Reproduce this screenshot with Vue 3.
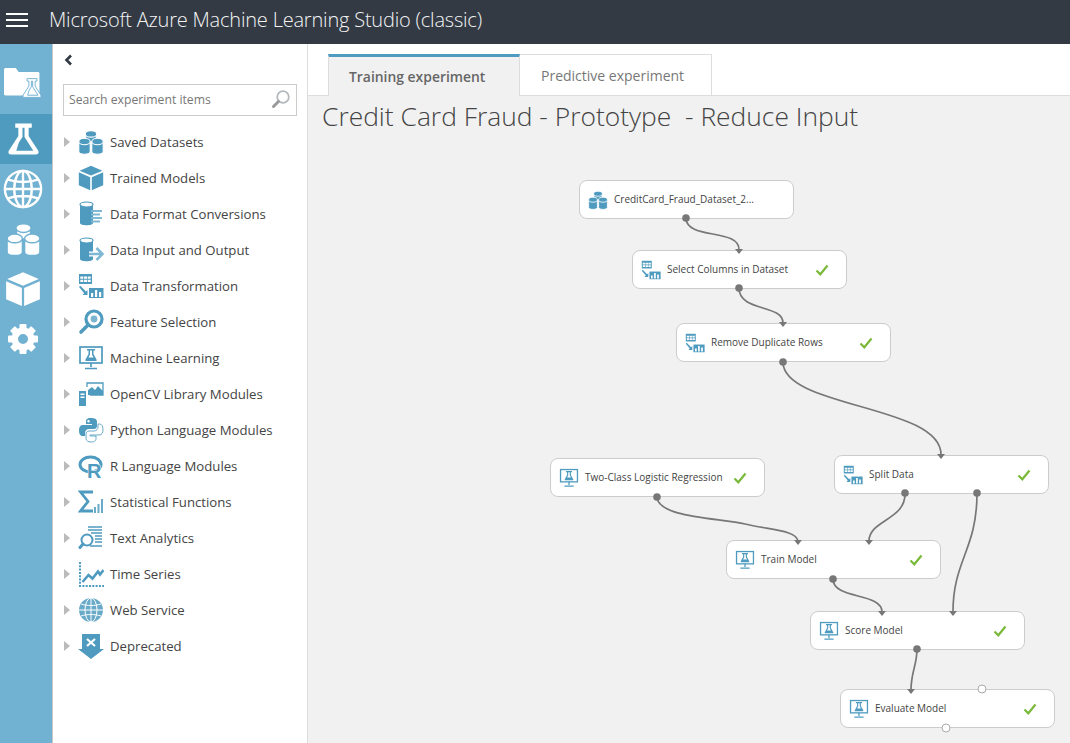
<template>
  <div class="studio">
    <svg class="iconDefs" width="0" height="0" aria-hidden="true">
      <defs>
        <symbol id="i-flask" viewBox="0 0 32 32">
          <path fill="currentColor" fill-rule="evenodd" d="M8 1h16v4h-3v8l9 14c1.500 2.800 0 4-2 4H4c-2 0-3.500-1.200-2-4l9-14V5H8zM15 5v9l-3.500 5.500-2.500 8h16.500L17 14V5z" />
        </symbol>
        <symbol id="i-folder" viewBox="0 0 32 32">
          <path fill="currentColor" d="M0 5c0-1 .6-1.500 1.500-1.500h9L13 7h17c1 0 1.500.5 1.500 1.500V28H1.500C.5 28 0 27.500 0 26.500z" />
        </symbol>
        <symbol id="i-globe" viewBox="0 0 32 32">
          <g fill="none" stroke="currentColor" stroke-width="1.900">
            <circle cx="16" cy="16" r="14.500" />
            <ellipse cx="16" cy="16" rx="7" ry="14.500" />
            <path d="M16 1.500v29M1.500 16h29M4 8.500c7 2.500 17 2.500 24 0M4 23.500c7-2.500 17-2.500 24 0" />
          </g>
        </symbol>
        <symbol id="i-cylinders" viewBox="0 0 32 32">
          <g class="gapStroke" fill="currentColor">
            <path d="M9.500 7v9h13V7z" />
            <ellipse cx="16" cy="6" rx="7" ry="4" />
            <path d="M1 16v12c0 4 14 4 14 0V16z" />
            <ellipse cx="8" cy="15.500" rx="7" ry="4" />
            <path d="M17 16v12c0 4 14 4 14 0V16z" />
            <ellipse cx="24" cy="15.500" rx="7" ry="4" />
          </g>
        </symbol>
        <symbol id="i-cube" viewBox="0 0 32 32">
          <g fill="currentColor">
            <path d="M16 1l14 6-14 6L2 7z" />
            <path d="M1 9l14 6v16L1 25z" />
            <path d="M31 9l-14 6v16l14-6z" />
          </g>
        </symbol>
        <symbol id="i-gear" viewBox="0 0 32 32">
          <g fill="currentColor">
            <path fill-rule="evenodd" d="M16 4.500a11.500 11.500 0 1 0 0 23 11.500 11.500 0 0 0 0-23zm0 6.500a5 5 0 1 1 0 10 5 5 0 0 1 0-10z" />
            <rect x="12.500" y="1" width="7" height="6" rx="1" />
            <rect x="12.500" y="25" width="7" height="6" rx="1" />
            <rect x="1" y="12.500" width="6" height="7" rx="1" />
            <rect x="25" y="12.500" width="6" height="7" rx="1" />
            <rect x="12.500" y="1" width="7" height="6" rx="1" transform="rotate(45 16 16)" />
            <rect x="12.500" y="1" width="7" height="6" rx="1" transform="rotate(135 16 16)" />
            <rect x="12.500" y="1" width="7" height="6" rx="1" transform="rotate(225 16 16)" />
            <rect x="12.500" y="1" width="7" height="6" rx="1" transform="rotate(315 16 16)" />
          </g>
        </symbol>
        <symbol id="i-format" viewBox="0 0 26 26">
          <path fill="currentColor" d="M2 4v18c0 3 13 3 13 0V4z" />
          <ellipse cx="8.500" cy="3.500" rx="6.500" ry="2.500" fill="#fff" stroke="currentColor" stroke-width="1.200" />
          <path fill="none" stroke="#7fb8d4" stroke-width="2" d="M13 10h11M13 13.500h9M13 17h11M13 20.500h9" />
        </symbol>
        <symbol id="i-input" viewBox="0 0 26 26">
          <path fill="currentColor" d="M2 4v18c0 3 13 3 13 0V4z" />
          <ellipse cx="8.500" cy="3.500" rx="6.500" ry="2.500" fill="#fff" stroke="currentColor" stroke-width="1.200" />
          <path fill="none" stroke="#fff" stroke-width="5" d="M11 17h12" />
          <path fill="none" stroke="#7fb8d4" stroke-width="2.600" d="M11 17h13M18.500 11l6 6-6 6" />
        </symbol>
        <symbol id="i-transform" viewBox="0 0 26 26">
          <g fill="currentColor">
            <rect x="1" y="1" width="13" height="10" />
            <path d="M1 14l1.300-1.300 5.700 5.700 1.500-1.500V22H4.500l1.700-1.700z" />
            <rect x="11" y="15" width="14.500" height="10" />
          </g>
          <path fill="#fff" d="M2.300 3.500h3v2.200h-3zM6 3.500h3v2.200H6zM9.700 3.500h3v2.200h-3zM2.300 6.800h3V9h-3zM6 6.800h3V9H6zM9.700 6.800h3V9h-3zM13 20h2.200v4H13zM17 17h2.200v7H17zM21 19h2.200v5H21z" />
        </symbol>
        <symbol id="i-feature" viewBox="0 0 26 26">
          <circle cx="16" cy="10" r="8" fill="none" stroke="currentColor" stroke-width="3.200" />
          <circle cx="16" cy="10" r="3.400" fill="currentColor" opacity=".75" />
          <path fill="none" stroke="currentColor" stroke-width="3.600" stroke-linecap="round" d="M10 16l-7 7" />
        </symbol>
        <symbol id="i-monitor" viewBox="0 0 26 26">
          <g fill="none" stroke="currentColor" stroke-width="1.700">
            <rect x="2" y="2" width="22" height="16" />
            <path d="M13 18v4M7 23.500h12" />
          </g>
          <path fill="currentColor" fill-rule="evenodd" d="M9 4h8v1.500h-1.500V9l3 5.500c.4 1 0 1.500-1 1.500h-9c-1 0-1.400-.5-1-1.500l3-5.500V5.500H9zM12 5.500V9.500l-1.500 3h5L14 9.500v-4z" />
        </symbol>
        <symbol id="i-opencv" viewBox="0 0 26 26">
          <path fill="currentColor" d="M1 10h7v15H1z" />
          <path fill="#fff" d="M2.500 12.500h4V14h-4zM2.500 15.500h4V17h-4z" />
          <path fill="none" stroke="currentColor" stroke-width="1.300" d="M9 6V2h16v12H12" />
          <path fill="currentColor" d="M10 14V9l4-3 3 3 3-4 5 5v4z" />
        </symbol>
        <symbol id="i-python" viewBox="0 0 26 26">
          <path fill="currentColor" d="M13 1C8.500 1 8 3 8 4.500V7h6v1H5c-3 0-4 2.500-4 5.500S2 19 4.500 19H7v-3c0-2 1.500-4 4-4h5c2 0 3-1.500 3-3V4.500C19 2 16.500 1 13 1zM10.500 3a1.200 1.200 0 1 1 0 2.500 1.200 1.200 0 0 1 0-2.500z" />
          <path fill="#fff" stroke="currentColor" stroke-width="1" opacity=".85" d="M13 25c4.500 0 5-2 5-3.500V19h-6v-1h9c3 0 4-2.500 4-5.500S24 7 21.500 7H20v3c0 2-1.500 4-4 4h-5c-2 0-3 1.500-3 3v4.500c0 2.500 2.500 3.500 5 3.500z" />
        </symbol>
        <symbol id="i-r" viewBox="0 0 26 26">
          <ellipse cx="12.500" cy="11.500" rx="10.500" ry="7.500" fill="none" stroke="currentColor" stroke-width="3" />
          <text x="9" y="25" font-family="Liberation Sans, sans-serif" font-size="20" font-weight="700" fill="currentColor" stroke="#fff" stroke-width="1" paint-order="stroke">R</text>
        </symbol>
        <symbol id="i-sigma" viewBox="0 0 26 26">
          <path fill="none" stroke="currentColor" stroke-width="2.800" d="M15 3H2.500l7.500 9.500L2.500 22H15" />
          <path fill="none" stroke="currentColor" stroke-width="2" d="M17 24v-6M20.500 24v-9M24 24V10" opacity=".85" />
        </symbol>
        <symbol id="i-text" viewBox="0 0 26 26">
          <circle cx="9" cy="15" r="5.500" fill="none" stroke="currentColor" stroke-width="2" />
          <path fill="none" stroke="currentColor" stroke-width="3" stroke-linecap="round" d="M5 19l-3 3.500" />
          <path fill="none" stroke="currentColor" stroke-width="1.400" d="M10 2h14M10 5h14M13 8h11M17 11h7M17 14h7M17 17h7M12 21h12" />
        </symbol>
        <symbol id="i-series" viewBox="0 0 26 26">
          <path fill="none" stroke="currentColor" stroke-width="2" stroke-dasharray="2 1.300" d="M2 1v24h24" />
          <path fill="none" stroke="currentColor" stroke-width="2.600" d="M4.500 21l6-7 4 3.500 5.500-7 2 3 3.500-4.500" />
        </symbol>
        <symbol id="i-web" viewBox="0 0 26 26">
          <circle cx="13" cy="13" r="12" fill="currentColor" opacity=".85" />
          <g fill="none" stroke="#fff" stroke-width="1">
            <ellipse cx="13" cy="13" rx="6" ry="12" />
            <path d="M13 1v24M1 13h24M3 7c6 2 14 2 20 0M3 19c6-2 14-2 20 0" />
          </g>
        </symbol>
        <symbol id="i-deprecated" viewBox="0 0 26 26">
          <path fill="currentColor" d="M4 1h18v15h4L13 26 0 16h4z" />
          <path fill="none" stroke="#fff" stroke-width="2.200" d="M9 6l8 7M17 6l-8 7" />
        </symbol>
      </defs>
    </svg>

    <header class="topBar">
      <button class="menuButton"><span></span><span></span><span></span></button>
      <div class="appTitle">Microsoft Azure Machine Learning Studio (classic)</div>
    </header>

    <div class="studioBody">
      <nav class="rail">
        <div class="railItem">
          <span class="railFolder">
            <svg class="folderIcon"><use href="#i-folder" /></svg>
            <svg class="folderFlask"><use href="#i-flask" /></svg>
          </span>
        </div>
        <div v-for="item in railItems" :key="item.icon" class="railItem" :class="{ active: item.active }">
          <svg :class="item.cls"><use :href="'#i-' + item.icon" /></svg>
        </div>
      </nav>

      <aside class="palette">
        <div class="collapseRow">
          <svg width="9" height="12" viewBox="0 0 9 12"><path d="M7 1.500L2.500 6 7 10.500" fill="none" stroke="#333a44" stroke-width="2.600" /></svg>
        </div>
        <div class="searchBox">
          <span class="searchText">Search experiment items</span>
          <svg width="20" height="20" viewBox="0 0 20 20">
            <circle cx="12" cy="8" r="5.800" fill="none" stroke="#b4b9bd" stroke-width="1.800" />
            <path d="M7.500 12.500L2.500 17.500" stroke="#9a9a9a" stroke-width="3" stroke-linecap="round" />
          </svg>
        </div>
        <ul class="paletteList">
          <li v-for="row in paletteRows" :key="row.label" class="paletteRow">
            <span class="expander"></span>
            <svg class="paletteIcon"><use :href="'#i-' + row.icon" /></svg>
            <span class="paletteLabel">{{ row.label }}</span>
          </li>
        </ul>
      </aside>

      <main class="workspace">
        <div class="tabBar">
          <div class="tab selected">Training experiment</div>
          <div class="tab">Predictive experiment</div>
        </div>
        <div class="canvas">
          <h1 class="experimentName">{{ experimentName }}</h1>

          <svg class="edges" width="762" height="647" viewBox="308 96 762 647">
            <path v-for="edge in edges" :key="edge" :d="edge" fill="none" stroke="#777" stroke-width="1.700" />
          </svg>

          <div v-for="node in nodes" :key="node.name" class="node" :style="{ left: node.x - 308 + 'px', top: node.y - 96 + 'px' }">
            <svg class="nodeIcon"><use :href="'#i-' + node.icon" /></svg>
            <span class="nodeName">{{ node.name }}</span>
            <svg v-if="node.done" class="nodeCheck" viewBox="0 0 14 12"><path d="M1.500 6.500l3.800 3.800L12.500 1.500" fill="none" stroke="#7ab93a" stroke-width="2.200" /></svg>
          </div>

          <svg class="edges" width="762" height="647" viewBox="308 96 762 647">
            <path v-for="a in inputs" :key="a[0] + '-' + a[1]" :d="arrowAt(a)" fill="#777" />
            <circle v-for="p in outputs" :key="p[0] + '-' + p[1]" :cx="p[0]" :cy="p[1]" r="3.800" fill="#777" />
            <circle cx="982" cy="689" r="4" fill="#fff" stroke="#aaa" />
            <circle cx="946" cy="728" r="4" fill="#fff" stroke="#aaa" />
          </svg>
        </div>
      </main>
    </div>
  </div>
</template>

<script setup>
const experimentName = 'Credit Card Fraud - Prototype  - Reduce Input';

const railItems = [
  { icon: 'flask', cls: 'railFlask', active: true },
  { icon: 'globe', cls: 'railGlobe' },
  { icon: 'cylinders', cls: 'railCyl' },
  { icon: 'cube', cls: 'railCube' },
  { icon: 'gear', cls: 'railGear' },
];

const paletteRows = [
  { label: 'Saved Datasets', icon: 'cylinders' },
  { label: 'Trained Models', icon: 'cube' },
  { label: 'Data Format Conversions', icon: 'format' },
  { label: 'Data Input and Output', icon: 'input' },
  { label: 'Data Transformation', icon: 'transform' },
  { label: 'Feature Selection', icon: 'feature' },
  { label: 'Machine Learning', icon: 'monitor' },
  { label: 'OpenCV Library Modules', icon: 'opencv' },
  { label: 'Python Language Modules', icon: 'python' },
  { label: 'R Language Modules', icon: 'r' },
  { label: 'Statistical Functions', icon: 'sigma' },
  { label: 'Text Analytics', icon: 'text' },
  { label: 'Time Series', icon: 'series' },
  { label: 'Web Service', icon: 'web' },
  { label: 'Deprecated', icon: 'deprecated' },
];

const nodes = [
  { name: 'CreditCard_Fraud_Dataset_2...', icon: 'cylinders', x: 579, y: 180, done: false },
  { name: 'Select Columns in Dataset', icon: 'transform', x: 632, y: 250, done: true },
  { name: 'Remove Duplicate Rows', icon: 'transform', x: 676, y: 323, done: true },
  { name: 'Two-Class Logistic Regression', icon: 'monitor', x: 550, y: 458, done: true },
  { name: 'Split Data', icon: 'transform', x: 834, y: 455, done: true },
  { name: 'Train Model', icon: 'monitor', x: 726, y: 540, done: true },
  { name: 'Score Model', icon: 'monitor', x: 810, y: 611, done: true },
  { name: 'Evaluate Model', icon: 'monitor', x: 840, y: 689, done: true },
];

const edges = [
  'M686 218C686 240 740 228 739 250',
  'M739 288C739 312 783 304 783 323',
  'M783 362C783 408 942 405 941 455',
  'M657 497C658 518 720 518 745 524S796 530 798 541',
  'M905 493C906 520 869 520 869 541',
  'M977 493C977 550 953 560 953 612',
  'M833 579C833 600 882 592 882 612',
  'M917 649C917 665 911 672 911 690',
];

const outputs = [[686, 218], [739, 288], [783, 362], [657, 497], [905, 493], [977, 493], [833, 579], [917, 649]];
const inputs = [[739, 254], [783, 327], [941, 459], [798, 545], [869, 545], [953, 616], [882, 616], [911, 694]];

const arrowAt = ([x, y]) => `M${x - 4} ${y - 5}h8l-4 5z`;
</script>

<style>
html, body { margin: 0; background: #fff; }
</style>

<style scoped>
.studio {
  display: flex;
  flex-direction: column;
  width: 1070px;
  height: 743px;
  overflow: hidden;
  font-family: "Open Sans", "Noto Sans", sans-serif;
  color: #444;
  --gap: #fff;
}

.iconDefs { position: absolute; }

.gapStroke { stroke: var(--gap); stroke-width: 1.300; }

.topBar {
  display: flex;
  align-items: center;
  flex: 0 0 44px;
  padding-bottom: 5px;
  box-sizing: border-box;
  background: #333a44;
  color: #f4f4f4;
}

.menuButton {
  display: flex;
  flex-direction: column;
  gap: 4px;
  width: 22px;
  margin: 0 21px 0 6px;
  padding: 0;
  border: none;
  background: none;
}

.menuButton span { height: 2px; background: #fff; }

.appTitle { font-size: 20px; font-weight: 300; letter-spacing: -0.2px; white-space: nowrap; }

.studioBody { display: flex; flex: 1; min-height: 0; }

.rail {
  flex: 0 0 52px;
  padding-top: 20px;
  background: #71b1d1;
  border-right: 1px solid #c8c8c8;
  color: #fff;
  --gap: #71b1d1;
}

.railItem {
  display: flex;
  align-items: center;
  justify-content: center;
  height: 50px;
  padding-right: 6px;
  box-sizing: border-box;
}

.railItem.active { background: #4f9bbf; }

.railFolder { position: relative; display: block; width: 40px; height: 36px; }
.folderIcon { position: absolute; left: 1px; top: -7px; width: 36px; height: 36px; }
.folderFlask {
  position: absolute;
  right: 0;
  bottom: 7px;
  width: 22px;
  height: 24px;
  padding: 1px;
  box-sizing: border-box;
  color: #fff;
  stroke: #71b1d1;
  stroke-width: 1.500;
}

.railFlask { width: 33px; height: 36px; }
.railGlobe { width: 40px; height: 40px; }
.railCyl { width: 35px; height: 38px; }
.railCube { width: 36px; height: 36px; }
.railGear { width: 32px; height: 32px; }

.palette {
  flex: 0 0 254px;
  border-right: 1px solid #ddd;
  background: #fff;
}

.collapseRow { display: flex; height: 40px; padding-left: 11px; padding-top: 10px; box-sizing: border-box; }

.searchBox {
  display: flex;
  align-items: center;
  justify-content: space-between;
  box-sizing: border-box;
  width: 234px;
  height: 32px;
  margin-left: 10px;
  padding: 0 5px 2px 5px;
  border: 1px solid #ccc;
}

.searchText { font-size: 12.200px; color: #777; }

.paletteList { margin: 8px 0 0; padding: 0; list-style: none; }

.paletteRow {
  display: flex;
  align-items: center;
  height: 36px;
  padding-left: 11px;
}

.expander {
  width: 0;
  height: 0;
  margin-right: 8px;
  border-left: 6px solid #bbb;
  border-top: 5px solid transparent;
  border-bottom: 5px solid transparent;
}

.paletteIcon { flex: none; width: 26px; height: 26px; color: #4f9bbf; }

.paletteLabel { margin-left: 6px; font-size: 13.200px; color: #444; white-space: nowrap; }

.workspace { display: flex; flex-direction: column; flex: 1; min-width: 0; }

.tabBar {
  display: flex;
  flex: 0 0 52px;
  box-sizing: border-box;
  padding: 10px 0 0 20px;
  border-bottom: 1px solid #ddd;
}

.tab {
  display: flex;
  align-items: center;
  box-sizing: border-box;
  width: 192px;
  height: 42px;
  margin-bottom: -1px;
  padding-left: 21px;
  border: 1px solid #ddd;
  border-left: none;
  background: #fff;
  font-size: 14px;
  color: #777;
}

.tab.selected {
  padding-left: 20px;
  border: none;
  border-top: 3px solid #4f9bbf;
  border-right: 1px solid #ddd;
  border-left: 1px solid #ddd;
  background: #f1f1f1;
  font-size: 13.900px;
  font-weight: 600;
  color: #666;
}

.canvas { position: relative; flex: 1; background: #f1f1f1; overflow: hidden; }

.experimentName {
  margin: 0;
  padding: 2px 0 0 14px;
  font-size: 26.400px;
  font-weight: 300;
  line-height: 36px;
  white-space: pre;
  color: #444;
}

.edges { position: absolute; left: 0; top: 0; pointer-events: none; }

.node {
  position: absolute;
  display: flex;
  align-items: center;
  box-sizing: border-box;
  width: 215px;
  height: 39px;
  padding: 0 17px 0 8px;
  border: 1px solid #ccc;
  border-radius: 8px;
  background: #fff;
}

.nodeIcon { flex: none; width: 20px; height: 20px; color: #4f9bbf; }

.nodeName { margin-left: 6px; padding-bottom: 2px; font-size: 10px; color: #444; white-space: nowrap; }

.nodeCheck { flex: none; width: 14px; height: 12px; margin-left: auto; }
</style>
